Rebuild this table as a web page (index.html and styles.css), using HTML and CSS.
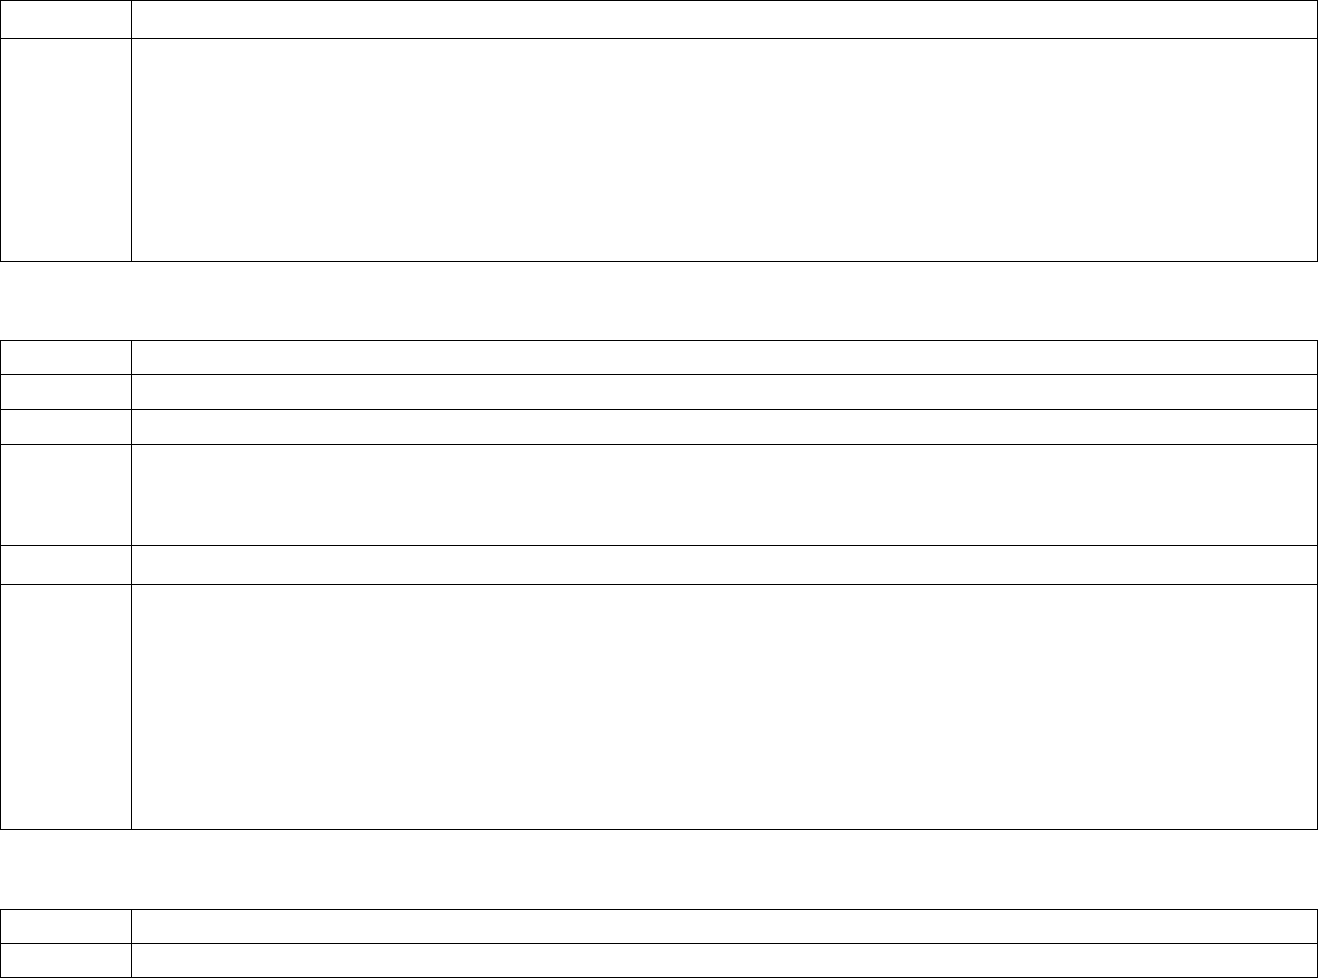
FILE: index.html
```html
<!DOCTYPE html>
<html>
<head>
<meta charset="utf-8">
<title>Tables</title>
<link rel="stylesheet" href="styles.css">
</head>
<body>
<div class="page">
  <div class="grid-table t1">
    <div class="cell h38"></div><div class="cell h38"></div>
    <div class="cell h223"></div><div class="cell h223"></div>
  </div>
  <div class="grid-table t2">
    <div class="cell h34"></div><div class="cell h34"></div>
    <div class="cell h35"></div><div class="cell h35"></div>
    <div class="cell h35"></div><div class="cell h35"></div>
    <div class="cell h101"></div><div class="cell h101"></div>
    <div class="cell h39"></div><div class="cell h39"></div>
    <div class="cell h245"></div><div class="cell h245"></div>
  </div>
  <div class="grid-table t3">
    <div class="cell h34"></div><div class="cell h34"></div>
    <div class="cell h34"></div><div class="cell h34"></div>
  </div>
</div>
</body>
</html>
```
FILE: styles.css
```css
html, body {
  margin: 0;
  padding: 0;
  background: #fff;
  font-family: "Liberation Serif", serif;
}
.page {
  display: flex;
  flex-direction: column;
  width: 1318px;
}
.grid-table {
  display: grid;
  grid-template-columns: 131px 1fr;
  border-top: 1px solid #000;
  border-left: 1px solid #000;
}
.t2 { margin-top: 78px; }
.t3 { margin-top: 79px; }
.cell {
  box-sizing: border-box;
  border-right: 1px solid #000;
  border-bottom: 1px solid #000;
}
.h34 { height: 34px; }
.h35 { height: 35px; }
.h38 { height: 38px; }
.h39 { height: 39px; }
.h101 { height: 101px; }
.h223 { height: 223px; }
.h245 { height: 245px; }
```
